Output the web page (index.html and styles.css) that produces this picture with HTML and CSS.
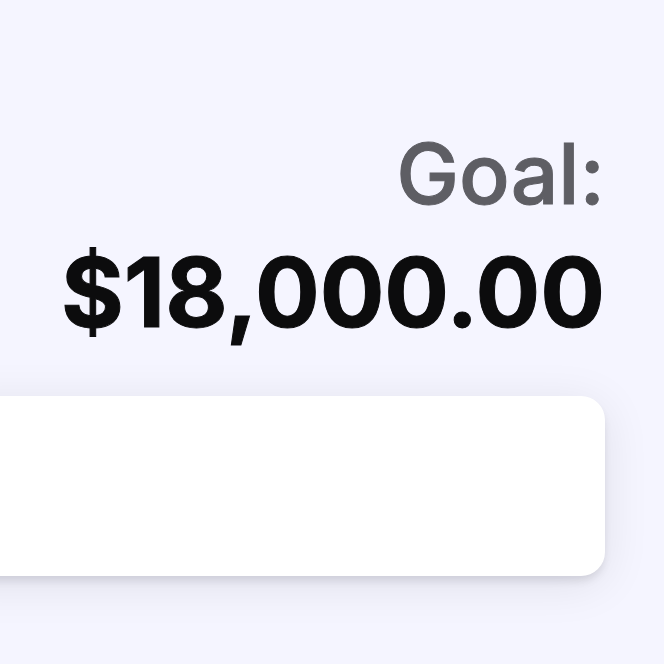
FILE: index.html
```html
<!DOCTYPE html>
<html lang="en">
<head>
    <meta charset="UTF-8">
    <meta name="viewport" content="width=device-width, initial-scale=1.0">
    <title>Goal</title>
    <link rel="stylesheet" href="styles.css">
</head>
<body>
    <main class="goal">
        <div class="goal-text">
            <p class="goal-label">Goal:</p>
            <p class="goal-amount">$18,000.00</p>
        </div>
        <div class="goal-bar"></div>
    </main>
</body>
</html>
```
FILE: styles.css
```css
* {
    box-sizing: border-box;
    margin: 0;
    padding: 0;
}

body {
    font-family: Inter, sans-serif;
    background-color: #f5f5ff;
    color: #0c0c0d;
    overflow-x: hidden;
}

.goal {
    min-height: 100vh;
    padding: 114px 59px 88px 0;
}

.goal-text {
    text-align: right;
    margin-bottom: 46px;
    -webkit-text-stroke: 1px;
}

.goal-label {
    font-size: 84px;
    font-weight: 500;
    line-height: 120px;
    color: #5e5e64;
}

.goal-amount {
    font-size: 96px;
    font-weight: 700;
    line-height: 116px;
}

/* The bar runs off the left edge of the window */
.goal-bar {
    height: 180px;
    margin-left: -60px;
    background: white;
    border-radius: 24px;
    box-shadow: 0 6px 10px -2px rgba(0, 0, 20, 0.12), 0 8px 48px rgba(0, 0, 20, 0.09);
}
```
